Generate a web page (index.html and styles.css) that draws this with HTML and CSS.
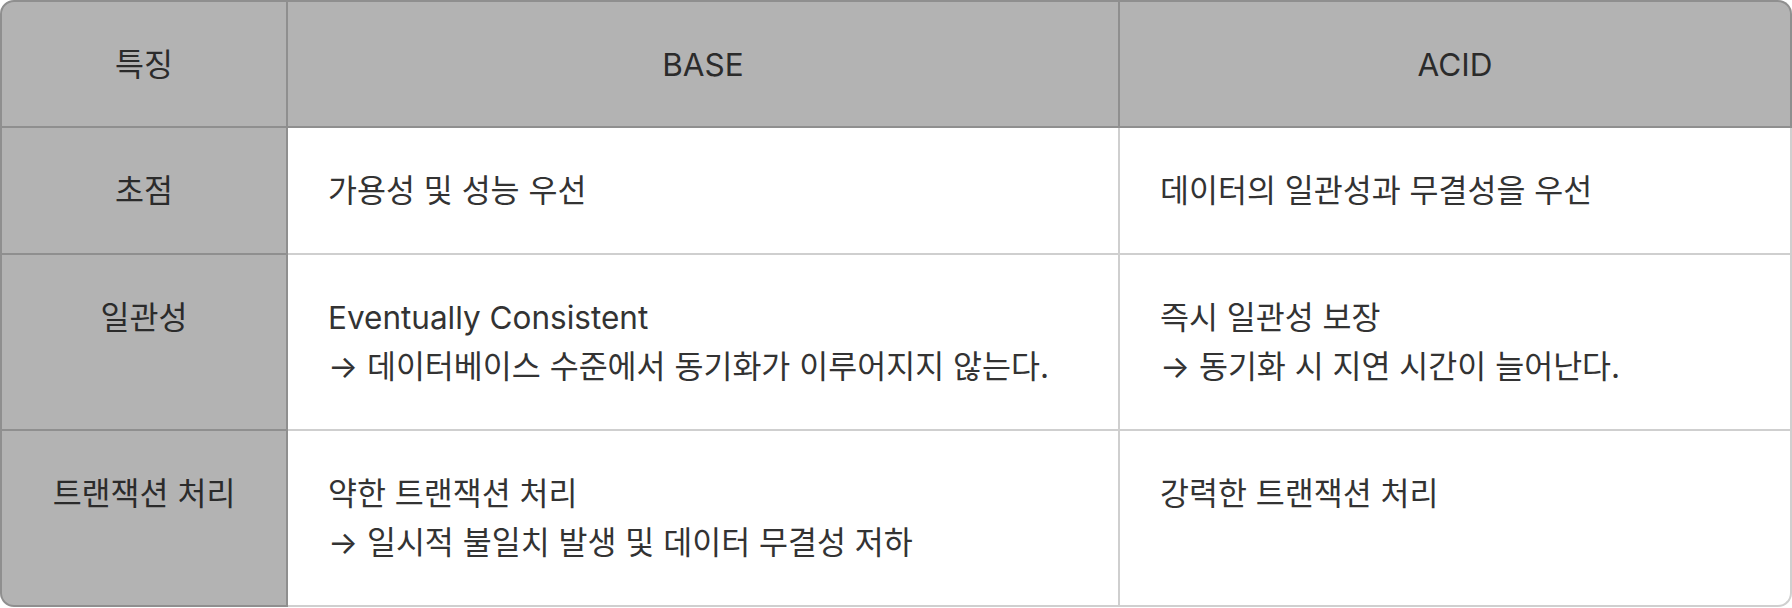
FILE: index.html
```html
<!DOCTYPE html>
<html lang="ko">
<head>
<meta charset="utf-8">
<title>BASE vs ACID</title>
<link rel="stylesheet" href="styles.css">
</head>
<body>
<table class="compare">
  <colgroup>
    <col class="col-feature">
    <col class="col-base">
    <col class="col-acid">
  </colgroup>
  <thead>
    <tr>
      <th class="head first">특징</th>
      <th class="head">BASE</th>
      <th class="head last">ACID</th>
    </tr>
  </thead>
  <tbody>
    <tr>
      <th class="feature">초점</th>
      <td class="cell">가용성 및 성능 우선</td>
      <td class="cell last">데이터의 일관성과 무결성을 우선</td>
    </tr>
    <tr>
      <th class="feature">일관성</th>
      <td class="cell">Eventually Consistent<br>→ 데이터베이스 수준에서 동기화가 이루어지지 않는다.</td>
      <td class="cell last">즉시 일관성 보장<br>→ 동기화 시 지연 시간이 늘어난다.</td>
    </tr>
    <tr class="final">
      <th class="feature">트랜잭션 처리</th>
      <td class="cell">약한 트랜잭션 처리<br>→ 일시적 불일치 발생 및 데이터 무결성 저하</td>
      <td class="cell last">강력한 트랜잭션 처리</td>
    </tr>
  </tbody>
</table>
</body>
</html>
```

FILE: styles.css
```css
html, body {
  margin: 0;
  padding: 0;
  background: #ffffff;
}

body {
  font-family: Inter, "Noto Sans CJK KR", sans-serif;
  color: #333333;
}

.compare {
  width: 1792px;
  border-collapse: separate;
  border-spacing: 0;
  table-layout: fixed;
  font-size: 31.5px;
  line-height: 49px;
}

.col-feature { width: 288px; }
.col-base { width: 832px; }
.col-acid { width: 672px; }

.compare th,
.compare td {
  border-right: 2px solid #cfcfcf;
  border-bottom: 2px solid #cfcfcf;
  font-weight: 400;
  vertical-align: top;
}

.head {
  background: #b3b3b3;
  border-top: 2px solid #8f8f8f;
  border-right-color: #8f8f8f !important;
  border-bottom-color: #8f8f8f !important;
  padding: 38px 20px 37px;
  text-align: center;
  color: #2b2b2b;
}

.head.first {
  border-left: 2px solid #8f8f8f;
  border-top-left-radius: 14px;
}

.head.last {
  border-top-right-radius: 14px;
}

.feature {
  background: #b3b3b3;
  border-left: 2px solid #8f8f8f;
  border-right-color: #8f8f8f !important;
  border-bottom-color: #8f8f8f !important;
  padding: 38px 10px 38px;
  text-align: center;
  color: #2b2b2b;
}

.cell {
  padding: 38px 40px 38px;
  text-align: left;
}

.final .feature {
  border-bottom-left-radius: 14px;
}

.final .last {
  border-bottom-right-radius: 14px;
}
```
